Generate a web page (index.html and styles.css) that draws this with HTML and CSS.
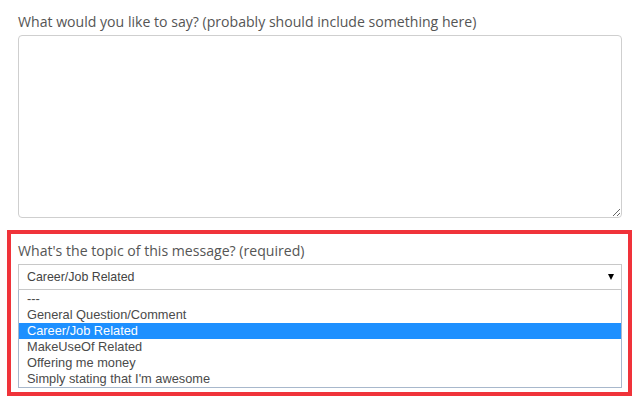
FILE: index.html
```html
<!DOCTYPE html>
<html>
<head>
<meta charset="utf-8">
<link rel="stylesheet" href="styles.css">
</head>
<body>
<div class="wrap">
  <label class="label" for="msg">What would you like to say? (probably should include something here)</label>
  <textarea id="msg" class="message"></textarea>
  <div class="highlight">
    <div class="label">What's the topic of this message? (required)</div>
    <div class="select">
      <span>Career/Job Related</span>
      <span class="arrow"></span>
    </div>
    <ul class="listbox">
      <li>---</li>
      <li>General Question/Comment</li>
      <li class="selected">Career/Job Related</li>
      <li>MakeUseOf Related</li>
      <li>Offering me money</li>
      <li>Simply stating that I'm awesome</li>
    </ul>
  </div>
</div>
</body>
</html>
```
FILE: styles.css
```css
* { box-sizing: border-box; }
html, body { margin: 0; padding: 0; background: #fff; }
body { width: 640px; height: 414px; overflow: hidden; }
.wrap { padding: 12px 18px 0 18px; }
.label {
  display: block;
  font-family: "Open Sans", "Noto Sans", sans-serif;
  font-size: 14.1px;
  line-height: 20px;
  color: #555;
  margin-bottom: 3px;
  white-space: nowrap;
}
.message {
  display: block;
  width: 604px;
  height: 183px;
  margin: 0;
  border: 1px solid #cfcfcf;
  border-radius: 4px;
  background: #fff;
  resize: both;
  outline: none;
}
.highlight {
  margin: 12px -10px 0 -11px;
  border: 4px solid #f0333a;
  padding: 7px 6px 4px 7px;
}
.select {
  display: flex;
  align-items: center;
  justify-content: space-between;
  height: 26px;
  border: 1px solid #c8c8c8;
  padding: 0 7px 0 8px;
  font-family: "Liberation Sans", Arial, sans-serif;
  font-size: 12.4px;
  color: #444;
}
.arrow {
  width: 0;
  height: 0;
  border-left: 3.5px solid transparent;
  border-right: 3.5px solid transparent;
  border-top: 6px solid #000;
}
.listbox {
  list-style: none;
  margin: 0;
  padding: 1px 0 0 0;
  border: 1px solid #a8b8cc;
  border-top: none;
  font-family: "Liberation Sans", Arial, sans-serif;
  font-size: 12.8px;
  color: #4a4a4a;
}
.listbox li {
  height: 16px;
  line-height: 16px;
  padding-left: 8px;
}
.listbox li.selected {
  background: #1e90ff;
  color: #fff;
}
```
